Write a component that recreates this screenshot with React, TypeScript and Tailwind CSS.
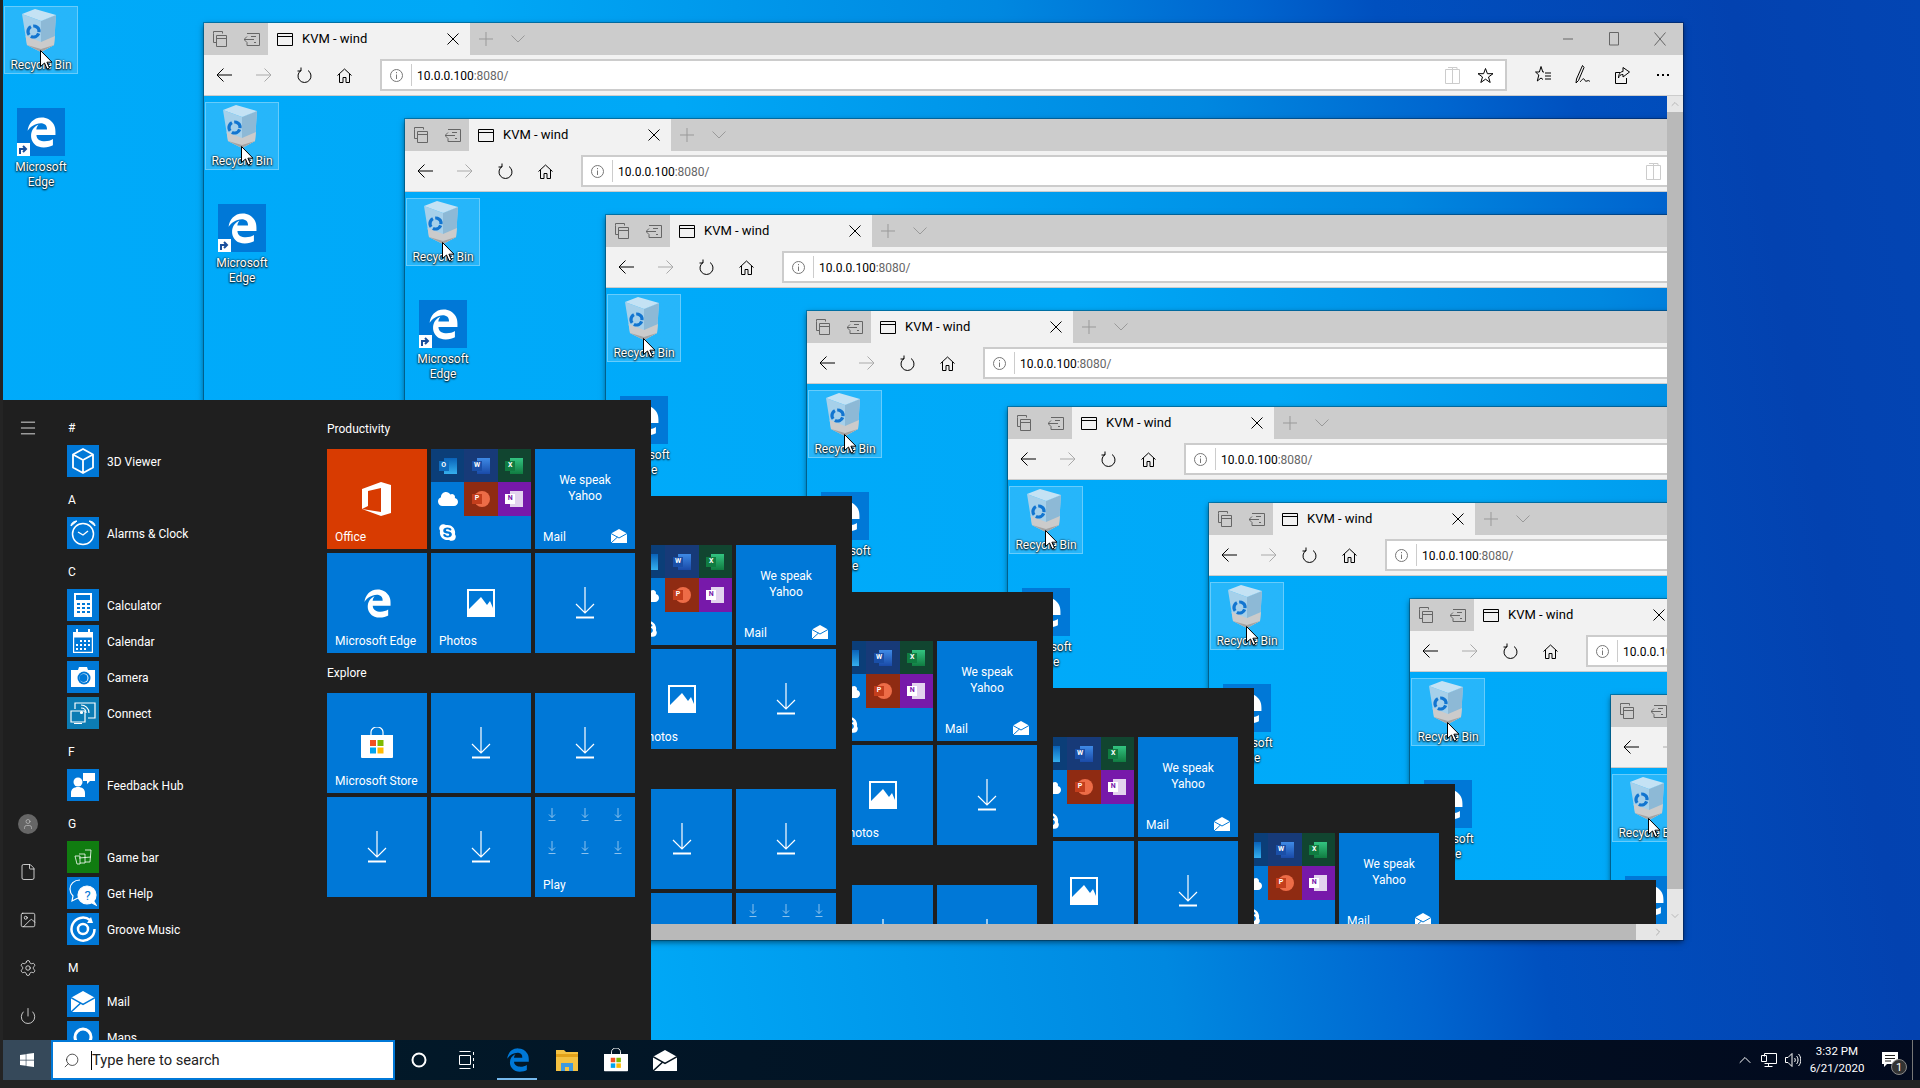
import type { ReactNode } from "react";
import { Menu, File, Image, Settings, Power, User, ChevronUp, ChevronDown, ChevronRight, Search } from "lucide-react";
import { FaEdgeLegacy, FaWindows, FaSkype, FaCloud } from "react-icons/fa";

const MAX_LEVEL = 8;

function Line({ w = 16, h = 16, vb, className, children }: { w?: number; h?: number; vb?: string; className?: string; children: ReactNode }) {
  return (
    <svg width={w} height={h} viewBox={vb ?? `0 0 ${w} ${h}`} fill="none" stroke="currentColor" strokeWidth={1} className={className}>
      {children}
    </svg>
  );
}

function MailGlyph({ w = 16, h = 14, line = "#0078d7" }: { w?: number; h?: number; line?: string }) {
  return (
    <svg width={w} height={h} viewBox="0 0 16 14">
      <path d="M0 4.5 8 0l8 4.5V14H0z" fill="#fff" />
      <path d="M0 4.5 8 9l8-4.5M0 14l6.5-6" fill="none" stroke={line} strokeWidth={1} />
    </svg>
  );
}

function OfficeGlyph() {
  return (
    <svg width="30" height="34" viewBox="0 0 30 34">
      <path d="M0 7 19 0l10 3v28l-10 3L0 27l19 3V6L6 9v15l-6 3z" fill="#fff" />
    </svg>
  );
}

function DownloadArrow({ small = false }: { small?: boolean }) {
  if (small) {
    return (
      <svg width="8" height="13" viewBox="0 0 8 13" fill="none" stroke="#fff" strokeWidth={1} opacity={0.55}>
        <path d="M4 0v9.500M1 6.500l3 3 3-3M0.500 12.500h7" />
      </svg>
    );
  }
  return (
    <svg width="20" height="32" viewBox="0 0 20 32" fill="none" stroke="#fff">
      <path d="M10 0v26M1 17l9 9 9-9" strokeWidth={1.2} />
      <path d="M1 30.500h18" strokeWidth={2} />
    </svg>
  );
}

function PhotosGlyph() {
  return (
    <svg width="28" height="28" viewBox="0 0 28 28">
      <path d="M0 0h28v28H0z" fill="#fff" />
      <path d="M2 2h24v17l-3-7-3 4-6-8-12 12z" fill="#0078d7" />
    </svg>
  );
}

function StoreGlyph({ size = 32 }: { size?: number }) {
  return (
    <svg width={size} height={size} viewBox="0 0 32 32">
      <path d="M10 9V5a6 5 0 0 1 12 0v4" fill="none" stroke="#fff" strokeWidth={1.2} />
      <path d="M0 8h32v22a1 1 0 0 1-1 1H1a1 1 0 0 1-1-1z" fill="#fff" />
      <path d="M9 13h6v6H9z" fill="#f25022" />
      <path d="M16.500 13h6v6h-6z" fill="#7fba00" />
      <path d="M9 20.500h6v6H9z" fill="#00a4ef" />
      <path d="M16.500 20.500h6v6h-6z" fill="#ffb900" />
    </svg>
  );
}

function RecycleBinGlyph() {
  return (
    <svg width="35" height="43" viewBox="0 0 35 43" className="mr-[3px]">
      <path d="M0 5 5 36l14 7 13-7 2-30-15 6z" fill="#a6d0ea" />
      <path d="M19 12l15-6-2 30-13 7z" fill="#8db9d6" />
      <path d="M0 5 13 0l21 6-15 6z" fill="#c4e2f4" />
      <path d="M3.600 27 19 33l14-6-1 9-13 7-14-7z" fill="#cbcbcb" />
      <path d="M5 36l14 7 13-7-13 4z" fill="#a3a3a3" />
      <circle cx="11.500" cy="22.500" r="5.500" fill="none" stroke="#1275d0" strokeWidth={3.200} strokeDasharray="9.300 2.200" transform="rotate(20 11.500 22.500)" />
    </svg>
  );
}

function Cursor() {
  return (
    <svg width="13" height="20" viewBox="0 0 13 20" className="absolute left-[37px] top-[50px]">
      <path d="M.5.5v16l4-3.500 2.600 6 2.400-1-2.600-5.800H12z" fill="#fff" stroke="#000" strokeWidth={1} />
    </svg>
  );
}

function DesktopIcons() {
  return (
    <div className="flex w-[75px] flex-col items-center pl-px pt-[6px] text-[12px] leading-[15px] text-white [text-shadow:0_1px_2px_#000,0_0_2px_#000]">
      <div className="flex h-[68px] w-[74px] flex-col items-center border border-white/30 bg-white/15 pt-[2px]">
        <RecycleBinGlyph />
        <span className="mt-[6px] whitespace-nowrap">Recycle Bin</span>
      </div>
      <div className="relative mt-[34px] flex h-12 w-12 items-center justify-center bg-[#0078d7]">
        <FaEdgeLegacy size={31} color="#fff" />
        <div className="absolute bottom-0 left-0 flex h-[13px] w-[13px] items-center justify-center bg-white">
          <svg width="9" height="9" viewBox="0 0 9 9" fill="none" stroke="#1a4f9c" strokeWidth={2}>
            <path d="M1 9V4h5M4 1l3 3-3 3" />
          </svg>
        </div>
      </div>
      <span className="mt-[4px] text-center">Microsoft<br />Edge</span>
    </div>
  );
}

function TitleBar() {
  return (
    <div className="flex h-8 shrink-0 items-center bg-[#cccccc] text-[#666]">
      <div className="flex h-8 w-8 items-center justify-center">
        <Line w={14} h={16}><path d="M.5 2.500V.5h9v2M.5 2.500v9h3M3.500 4.500h10v11h-10zM3.500 7.500h10" /></Line>
      </div>
      <div className="flex h-8 w-8 items-center justify-center">
        <Line w={16} h={13}><path d="M3 .5h12.500v12H3V9.500M0 6.500h10M3 3.500l-3 3 3 3M7 3.500h5M10 9.500h2" /></Line>
      </div>
      <div className="flex h-8 w-[202px] items-center bg-[#f2f2f2] pl-[9px] text-black">
        <Line w={16} h={13}><path d="M.5.5h15v12H.5zM.5 3.500h15" /></Line>
        <span className="ml-[9px] flex-1 whitespace-nowrap text-[13px]">KVM - wind</span>
        <Line w={12} h={12} className="mr-[11px]"><path d="M.5.5l11 11M11.500.5l-11 11" /></Line>
      </div>
      <div className="flex h-8 w-8 items-center justify-center text-[#999]">
        <Line w={14} h={14}><path d="M7 0v14M0 7h14" /></Line>
      </div>
      <div className="flex h-8 w-8 items-center justify-center text-[#999]">
        <Line w={14} h={8}><path d="M.5.5 7 7l6.500-6.500" /></Line>
      </div>
      <div className="flex-1" />
      <div className="flex h-8 w-[46px] items-center justify-center">
        <Line w={10} h={2}><path d="M0 1h10" /></Line>
      </div>
      <div className="flex h-8 w-[46px] items-center justify-center">
        <Line w={10} h={14}><path d="M.5.5h9v12.500h-9z" /></Line>
      </div>
      <div className="flex h-8 w-[46px] items-center justify-center">
        <Line w={12} h={14}><path d="M.5.5l11 13M11.500.5l-11 13" /></Line>
      </div>
    </div>
  );
}

function NavButton({ children, className }: { children: ReactNode; className?: string }) {
  return <div className={`flex h-10 w-10 shrink-0 items-center justify-center ${className ?? ""}`}>{children}</div>;
}

function Toolbar() {
  return (
    <div className="flex h-[41px] shrink-0 items-start border-b border-[#cccccc] bg-[#f2f2f2] text-black">
      <NavButton>
        <Line w={16} h={14}><path d="M16 7H1M7.500.5 1 7l6.500 6.500" /></Line>
      </NavButton>
      <NavButton className="text-[#aaa]">
        <Line w={16} h={14}><path d="M0 7h15M8.500.5 15 7l-6.500 6.500" /></Line>
      </NavButton>
      <NavButton>
        <Line w={15} h={17}><path d="M4 3.500a6.500 6.500 0 1 0 7 0M4 .5v3.500H.5" /></Line>
      </NavButton>
      <NavButton>
        <Line w={15} h={15}><path d="M.5 7.500 7.500 1l7 6.500M2.500 6v8.500h3.500v-5h3v5h3.500V6" /></Line>
      </NavButton>
      <div className="ml-4 mt-1 flex h-8 flex-1 items-center border-2 border-[#cccccc] bg-white">
        <div className="flex w-[29px] justify-center text-[#777]">
          <Line w={13} h={13}><circle cx="6.500" cy="6.500" r="6" /><path d="M6.500 5.500v4.500M6.500 3v1.200" /></Line>
        </div>
        <div className="h-[22px] w-px bg-[#ccc]" />
        <span className="ml-[5px] flex-1 whitespace-nowrap pt-px text-[12px]">
          10.0.0.100<span className="text-[#666]">:8080/</span>
        </span>
        <div className="mr-[18px] text-[#ccc]">
          <Line w={15} h={17}><path d="M.5 2.500h14v14H.5zM7.500 2.500v14M3 .5h4.500v2M7.500 2.500V.5H12v2" /></Line>
        </div>
        <div className="mr-[12px]">
          <Line w={15} h={15}><path d="M7.500.5 9.400 5.700H15L10.500 9l1.700 5.500-4.700-3.300-4.700 3.300L4.500 9 0 5.700h5.600z" /></Line>
        </div>
      </div>
      <div className="ml-4 flex w-40 shrink-0">
        <NavButton>
          <Line w={16} h={18}><path d="M6 .5 7.800 6H9M6 .5 4.400 6H.5l3.300 3-1.500 6L6 12l2 1.500M10 7h6M10 10h6M10 13h6" /></Line>
        </NavButton>
        <NavButton>
          <Line w={16} h={20}><path d="M7.500.5 1.500 14 1 18l2.500-2.500 5.500-13zM5 17c2-2 3-4 4-3s1 3 3 2 2 0 3 .5" /></Line>
        </NavButton>
        <NavButton>
          <Line w={16} h={17}><path d="M5 5.500H.5v11h11V11M8 .5l6.500 4.500L8 10V7.500c-2.500 0-4 1-4.500 3.500 0-4 2-6.500 4.500-6.500z" /></Line>
        </NavButton>
        <NavButton>
          <div className="flex gap-[3px]">
            <div className="h-[2px] w-[2px] bg-black" />
            <div className="h-[2px] w-[2px] bg-black" />
            <div className="h-[2px] w-[2px] bg-black" />
          </div>
        </NavButton>
      </div>
    </div>
  );
}

function BrowserWindow({ level }: { level: number }) {
  return (
    <div className="absolute left-[201px] top-[23px] flex h-[917px] w-[1479px] flex-col bg-[#f2f2f2] shadow-[0_0_0_1px_rgba(0,0,0,0.25),0_2px_6px_rgba(0,0,0,0.55)]">
      <TitleBar />
      <Toolbar />
      <div className="flex min-h-0 flex-1">
        <div className="flex min-w-0 flex-1 flex-col">
          <div className="relative min-h-0 flex-1 overflow-hidden">
            <div className="absolute -left-[3px] top-0">
              <Screen level={level + 1} />
            </div>
          </div>
          <div className="flex h-4 shrink-0 bg-[#e6e6e6]">
            <div className="flex-1 bg-[#b9b9b9]" />
            <div className="flex w-[31px] items-center justify-end pr-[3px] text-[#777]">
              <ChevronRight size={12} strokeWidth={1} />
            </div>
          </div>
        </div>
        <div className="flex w-4 shrink-0 flex-col bg-[#e6e6e6] text-[#888]">
          <div className="flex h-4 shrink-0 items-center justify-center">
            <ChevronUp size={12} strokeWidth={1} />
          </div>
          <div className="flex-1 bg-[#b9b9b9]" />
          <div className="flex h-[51px] shrink-0 items-end justify-center pb-[18px]">
            <ChevronDown size={12} strokeWidth={1} />
          </div>
        </div>
      </div>
    </div>
  );
}

function AppIcon({ bg = "bg-[#0078d7]", children }: { bg?: string; children: ReactNode }) {
  return <div className={`flex h-8 w-8 shrink-0 items-center justify-center overflow-hidden ${bg}`}>{children}</div>;
}

const startApps: { letter: string; apps: { name: string; bg?: string; icon: ReactNode }[] }[] = [
  {
    letter: "#",
    apps: [
      {
        name: "3D Viewer",
        icon: (
          <svg width="22" height="26" viewBox="0 0 22 26" fill="none" stroke="#fff" strokeWidth={1.800} strokeLinejoin="round">
            <path d="M11 1 21 6.500v13L11 25 1 19.500v-13zM1 6.500 11 12l10-5.500M11 12v13" />
          </svg>
        ),
      },
    ],
  },
  {
    letter: "A",
    apps: [
      {
        name: "Alarms & Clock",
        icon: (
          <svg width="26" height="26" viewBox="0 0 26 26" fill="none" stroke="#fff">
            <circle cx="13" cy="14" r="10.500" strokeWidth={1.500} />
            <path d="M8 12l5 3 5-4" strokeWidth={1.400} />
            <path d="M1 6c0-3 3-5 6-5zM25 6c0-3-3-5-6-5z" fill="#fff" />
          </svg>
        ),
      },
    ],
  },
  {
    letter: "C",
    apps: [
      {
        name: "Calculator",
        icon: (
          <svg width="18" height="24" viewBox="0 0 18 24">
            <path d="M0 0h18v24H0z" fill="#fff" />
            <path d="M2 2h14v5H2zM3 10h3v2H3zM8 10h3v2H8zM13 10h3v2h-3zM3 14h3v2H3zM8 14h3v2H8zM13 14h3v2h-3zM3 18h3v2H3zM8 18h3v2H8zM13 18h3v2h-3z" fill="#0078d7" />
          </svg>
        ),
      },
      {
        name: "Calendar",
        icon: (
          <svg width="20" height="24" viewBox="0 0 20 24">
            <path d="M0 3h20v5H0zM3 0h2v4H3zM15 0h2v4h-2z" fill="#fff" />
            <path d="M.6 8h18.800v15.400H.6z" fill="none" stroke="#fff" strokeWidth={1.200} />
            <path d="M7 11h2v2H7zM11 11h2v2h-2zM15 11h2v2h-2zM3 15h2v2H3zM7 15h2v2H7zM11 15h2v2h-2zM15 15h2v2h-2zM3 19h2v2H3zM7 19h2v2H7zM11 19h2v2h-2z" fill="#fff" />
          </svg>
        ),
      },
      {
        name: "Camera",
        icon: (
          <svg width="24" height="20" viewBox="0 0 24 20">
            <path d="M0 3h7l1-3h8l1 3h7v17H0z" fill="#fff" />
            <circle cx="13" cy="11" r="6.500" fill="#0078d7" />
            <circle cx="13" cy="11" r="4.500" fill="#fff" />
            <circle cx="12.500" cy="11" r="4" fill="#0078d7" />
          </svg>
        ),
      },
      {
        name: "Connect",
        bg: "bg-[#0c7cb4]",
        icon: (
          <svg width="26" height="22" viewBox="0 0 26 22" fill="none" stroke="#fff" strokeWidth={1.200}>
            <path d="M5 7V1h20v15h-7M1 9h14v11H1zM4 21.500h8" />
            <path d="M11 6c3 0 5 2 5 5M11 3c4 0 8 3 8 8" />
            <circle cx="11.500" cy="10.500" r="1" fill="#fff" />
          </svg>
        ),
      },
    ],
  },
  {
    letter: "F",
    apps: [
      {
        name: "Feedback Hub",
        icon: (
          <svg width="24" height="24" viewBox="0 0 24 24" fill="#fff">
            <circle cx="7" cy="9" r="4.500" />
            <path d="M0 24v-4c0-4 3-6 7-6s7 2 7 6v4zM12 0h12v8h-5l-3 3V8h-4z" />
          </svg>
        ),
      },
    ],
  },
  {
    letter: "G",
    apps: [
      {
        name: "Game bar",
        bg: "bg-[#107c10]",
        icon: (
          <svg width="18" height="16" viewBox="0 0 18 16" fill="none" stroke="#fff" strokeWidth={0.800}>
            <path d="M1 7h5v8H3zM5 5h6v9H6M11 1h6l-1 12h-5M5 9l12-1" />
          </svg>
        ),
      },
      {
        name: "Get Help",
        icon: (
          <svg width="28" height="28" viewBox="0 0 28 28" fill="none" stroke="#fff" strokeWidth={1.200}>
            <path d="M11 1C5 1 1 5 1 10c0 3 1 5 3 7l-1 5 6-3" />
            <circle cx="18" cy="16" r="9" fill="#fff" />
            <path d="M24 21l3 5-6-3z" fill="#fff" />
            <text x="15.500" y="21" fill="#0078d7" stroke="none" fontSize="13">?</text>
          </svg>
        ),
      },
      {
        name: "Groove Music",
        icon: (
          <svg width="26" height="26" viewBox="0 0 26 26" fill="none" stroke="#fff">
            <path d="M20 4a11.500 11.500 0 1 0 4.500 9" strokeWidth={2.500} />
            <circle cx="13" cy="13" r="5" strokeWidth={2.500} />
            <path d="M21 1l2 6h-6z" fill="#fff" stroke="none" />
          </svg>
        ),
      },
    ],
  },
  {
    letter: "M",
    apps: [
      { name: "Mail", icon: <MailGlyph w={24} h={21} /> },
      {
        name: "Maps",
        icon: (
          <svg width="24" height="24" viewBox="0 0 24 24" fill="none" stroke="#fff" strokeWidth={3}>
            <circle cx="12" cy="12" r="8" />
          </svg>
        ),
      },
    ],
  },
];

function Tile({ label, bg = "bg-[#0078d7]", children }: { label?: string; bg?: string; children?: ReactNode }) {
  return (
    <div className={`relative flex h-[100px] w-[100px] items-center justify-center text-[12px] text-white ${bg}`}>
      {children}
      {label && <span className="absolute bottom-[3px] left-2 whitespace-nowrap">{label}</span>}
    </div>
  );
}

function MiniApp({ bg, letter, back, letterBg }: { bg: string; letter: string; back: string; letterBg: string }) {
  return (
    <div className={`flex items-center justify-center ${bg}`}>
      <div className="relative h-[16px] w-[18px]">
        <div className={`absolute right-0 top-0 h-[16px] w-[13px] ${back}`} />
        <div className={`absolute left-0 top-[3px] flex h-[10px] w-[10px] items-center justify-center text-[7px] font-bold leading-none ${letterBg}`}>
          {letter}
        </div>
      </div>
    </div>
  );
}

function OfficeGroupTile() {
  return (
    <div className="grid h-[100px] w-[100px] grid-cols-3 grid-rows-3 bg-[#0078d7]">
      <MiniApp bg="bg-[#0b3e78]" letter="O" back="bg-gradient-to-b from-[#0a62b8] to-[#35b0ee]" letterBg="bg-[#0f6cbd] text-white" />
      <MiniApp bg="bg-[#173a78]" letter="W" back="bg-gradient-to-b from-[#3f8ae6] to-[#1a4aa8]" letterBg="bg-[#1a4fa8] text-white" />
      <MiniApp bg="bg-[#114530]" letter="X" back="bg-gradient-to-b from-[#33c481] to-[#107c41]" letterBg="bg-[#107c41] text-white" />
      <div className="flex items-center justify-center">
        <FaCloud size={20} color="#fff" />
      </div>
      <div className="flex items-center justify-center bg-[#8f2b12]">
        <div className="relative h-4 w-[18px]">
          <div className="absolute right-0 top-0 h-4 w-4 rounded-full bg-[#ed6c47]" />
          <div className="absolute left-0 top-[3px] flex h-[10px] w-[10px] items-center justify-center bg-[#c43e1c] text-[7px] font-bold leading-none text-white">P</div>
        </div>
      </div>
      <MiniApp bg="bg-[#7719aa]" letter="N" back="bg-[#e3d3ee]" letterBg="bg-white text-[#7719aa]" />
      <div className="flex items-center justify-center">
        <FaSkype size={19} color="#fff" />
      </div>
    </div>
  );
}

function PlayTile() {
  return (
    <div className="relative h-[100px] w-[100px] bg-[#0078d7] text-[12px] text-white">
      <div className="grid grid-cols-3 justify-items-center gap-y-5 pt-[11px]">
        <DownloadArrow small />
        <DownloadArrow small />
        <DownloadArrow small />
        <DownloadArrow small />
        <DownloadArrow small />
        <DownloadArrow small />
      </div>
      <span className="absolute bottom-[3px] left-2">Play</span>
    </div>
  );
}

function StartMenu() {
  return (
    <div className="absolute left-0 top-[400px] flex h-[640px] w-[648px] overflow-hidden bg-[#1f1f1f] text-[12px] text-white">
      <div className="flex w-[50px] shrink-0 flex-col items-center justify-between pt-1 text-white">
        <div className="flex h-12 items-center">
          <Menu size={20} strokeWidth={1} />
        </div>
        <div className="flex flex-col items-center">
          <div className="flex h-12 items-center">
            <div className="flex h-5 w-5 items-center justify-center rounded-full bg-[#666]">
              <User size={12} strokeWidth={1.200} color="#ccc" />
            </div>
          </div>
          <div className="flex h-12 items-center"><File size={18} strokeWidth={1} /></div>
          <div className="flex h-12 items-center"><Image size={18} strokeWidth={1} /></div>
          <div className="flex h-12 items-center"><Settings size={18} strokeWidth={1} /></div>
          <div className="flex h-12 items-center"><Power size={18} strokeWidth={1} /></div>
        </div>
      </div>
      <div className="w-[274px] shrink-0 pl-[14px] pt-[7px]">
        {startApps.map((group) => (
          <div key={group.letter}>
            <div className="flex h-9 items-center pl-px pt-[6px]">{group.letter}</div>
            {group.apps.map((app) => (
              <div key={app.name} className="flex h-9 items-center gap-2">
                <AppIcon bg={app.bg}>{app.icon}</AppIcon>
                <span className="whitespace-nowrap pt-[2px]">{app.name}</span>
              </div>
            ))}
          </div>
        ))}
      </div>
      <div className="pt-[18px]">
        <div className="mb-[9px] flex h-[22px] items-center">Productivity</div>
        <div className="grid grid-cols-[100px_100px_100px] gap-1">
          <Tile label="Office" bg="bg-[#d83b01]">
            <OfficeGlyph />
          </Tile>
          <OfficeGroupTile />
          <Tile label="Mail">
            <div className="absolute left-0 top-[23px] w-full text-center leading-4">We speak<br />Yahoo</div>
            <div className="absolute bottom-[6px] right-2"><MailGlyph line="#0078d7" /></div>
          </Tile>
          <Tile label="Microsoft Edge"><FaEdgeLegacy size={29} color="#fff" /></Tile>
          <Tile label="Photos"><PhotosGlyph /></Tile>
          <Tile><DownloadArrow /></Tile>
        </div>
        <div className="mb-[9px] mt-[9px] flex h-[22px] items-center">Explore</div>
        <div className="grid grid-cols-[100px_100px_100px] gap-1">
          <Tile label="Microsoft Store"><StoreGlyph /></Tile>
          <Tile><DownloadArrow /></Tile>
          <Tile><DownloadArrow /></Tile>
          <Tile><DownloadArrow /></Tile>
          <Tile><DownloadArrow /></Tile>
          <PlayTile />
        </div>
      </div>
    </div>
  );
}

function TaskButton({ children, className }: { children: ReactNode; className?: string }) {
  return <div className={`relative flex h-10 shrink-0 items-center justify-center ${className ?? ""}`}>{children}</div>;
}

function Taskbar() {
  return (
    <div className="flex h-10 shrink-0 items-stretch bg-[linear-gradient(90deg,#021c2b,#020a1e)] text-white">
      <TaskButton className="w-12 bg-[#36495a]">
        <FaWindows size={16} color="#fff" />
      </TaskButton>
      <div className="flex w-[344px] shrink-0 items-center border-2 border-[#0078d7] bg-white text-[14.700px] text-[#222]">
        <Search size={17} strokeWidth={1} className="ml-[10px] -scale-x-100" color="#111" />
        <div className="ml-[11px] h-[19px] w-px bg-black" />
        <span className="whitespace-nowrap">Type here to search</span>
      </div>
      <TaskButton className="w-12">
        <svg width="16" height="16" viewBox="0 0 16 16" fill="none" stroke="#fff" strokeWidth={2}>
          <circle cx="8" cy="8" r="6.500" />
        </svg>
      </TaskButton>
      <TaskButton className="w-12">
        <Line w={16} h={18}><path d="M.5 4.500h11v9H.5zM.5.5h11M.5 17.500h11M14.500 1v3M14.500 7v3M14.500 13v4" /></Line>
      </TaskButton>
      <TaskButton className="ml-[2px] w-[49px]">
        <FaEdgeLegacy size={24} color="#0078d7" />
        <div className="absolute bottom-0 left-1 right-[5px] h-[2px] bg-[#76b9ed]" />
      </TaskButton>
      <TaskButton className="w-[49px]">
        <svg width="22" height="22" viewBox="0 0 22 22">
          <path d="M0 1h8l2 2h12v19H0z" fill="#f5c242" />
          <path d="M0 5h22v3H0z" fill="#e3a21a" />
          <path d="M5 14h12v8h-4v-4H9v4H5z" fill="#3f9ae0" />
        </svg>
      </TaskButton>
      <TaskButton className="w-[49px]"><StoreGlyph size={24} /></TaskButton>
      <TaskButton className="w-[49px]"><MailGlyph w={24} h={21} line="#04131f" /></TaskButton>
      <div className="flex-1" />
      <TaskButton className="w-6"><ChevronUp size={20} strokeWidth={1.200} /></TaskButton>
      <TaskButton className="w-6">
        <Line w={16} h={14}><path d="M3.500 3.500V.5h12v10h-12M7.500 10.500v3M3.500 13.500h8M.5 2.500h5v6h-5z" /></Line>
      </TaskButton>
      <TaskButton className="w-6">
        <Line w={16} h={14}><path d="M.5 4.500h2.500L7 .5v13l-4-4H.5zM9.500 5c1 1 1 3 0 4M11.500 3c2 2 2 6 0 8M13.500 1c3 3 3 9 0 12" /></Line>
      </TaskButton>
      <div className="flex w-[67px] shrink-0 flex-col items-center justify-center pr-[3px] text-[11.500px] leading-[17px]">
        <span>3:32 PM</span>
        <span>6/21/2020</span>
      </div>
      <TaskButton className="w-10">
        <svg width="16" height="16" viewBox="0 0 16 16" className="-ml-[4px]">
          <path d="M0 0h16v12H5l-3 3v-3H0z" fill="#fff" />
          <path d="M3 3.500h10M3 6.500h10M3 9h6" stroke="#222" strokeWidth={1} />
        </svg>
        <div className="absolute bottom-[5px] right-[5px] flex h-4 w-4 items-center justify-center rounded-full border border-[#888] bg-[#333] text-[11px] leading-none">1</div>
      </TaskButton>
      <div className="w-2 shrink-0 border-l border-[#777]" />
    </div>
  );
}

function Screen({ level }: { level: number }) {
  return (
    <div className="relative flex h-[1088px] w-[1920px] flex-col overflow-hidden bg-[#242424] pb-2 pl-[3px] font-['Roboto',sans-serif]">
      <div className="relative min-h-0 flex-1 bg-[linear-gradient(80deg,#00abfb_0%,#00a8f6_31%,#0088e0_56%,#0065cf_68%,#0050bf_74%,#0342b0_91%,#0345b3_100%)]">
        <DesktopIcons />
        {level < MAX_LEVEL && <BrowserWindow level={level} />}
        <StartMenu />
        <Cursor />
      </div>
      <Taskbar />
    </div>
  );
}

export default function App() {
  return <Screen level={0} />;
}
